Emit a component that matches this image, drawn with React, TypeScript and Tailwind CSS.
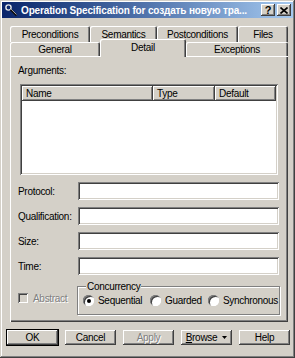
import React from "react";

const raised =
  "shadow-[inset_-1px_-1px_0_#404040,inset_1px_1px_0_#ffffff,inset_-2px_-2px_0_#808080,inset_2px_2px_0_#d4d0c8]";
const sunken =
  "shadow-[inset_1px_1px_0_#808080,inset_-1px_-1px_0_#ffffff,inset_2px_2px_0_#404040,inset_-2px_-2px_0_#d4d0c8]";
const tabEdge =
  "rounded-t-[2px] shadow-[inset_1px_1px_0_#ffffff,inset_-1px_0_0_#404040,inset_-2px_0_0_#808080]";

function Tab({ label, w, h, selected }: { label: string; w: string; h: string; selected?: boolean }) {
  return (
    <div
      className={`${w} ${h} ${tabEdge} bg-[#d4d0c8] flex items-center justify-center ${
        selected ? "relative z-10 -mb-px pb-[2px]" : ""
      }`}
    >
      {label}
    </div>
  );
}

function TextRow({ label }: { label: string }) {
  return (
    <div className="flex items-center h-[18px]">
      <span className="w-[68px] pl-[8px]">{label}</span>
      <div className={`w-[201px] h-[18px] bg-white ${sunken}`} />
    </div>
  );
}

function Radio({ label, checked, w }: { label: string; checked?: boolean; w: string }) {
  return (
    <div className={`flex items-center ${w}`}>
      <div className="w-[11px] h-[11px] rounded-full bg-white shadow-[inset_1px_1px_0_#808080,inset_-1px_-1px_0_#ffffff,inset_2px_2px_0_#404040] flex items-center justify-center">
        {checked && <div className="w-[4px] h-[4px] rounded-full bg-black" />}
      </div>
      <span className="ml-[4px]">{label}</span>
    </div>
  );
}

function Button({ children, def, disabled }: { children: React.ReactNode; def?: boolean; disabled?: boolean }) {
  return (
    <div
      className={`w-[51px] h-[15px] flex items-center justify-center bg-[#d4d0c8] ${
        def ? "outline outline-1 outline-black" : ""
      } ${raised} ${disabled ? "text-[#808080] [text-shadow:1px_1px_0_#ffffff]" : ""}`}
    >
      {children}
    </div>
  );
}

export default function App() {
  return (
    <div
      className="w-[295px] h-[358px] bg-[#d4d0c8] text-black text-[10px] tracking-[-0.3px] leading-[13px] overflow-hidden shadow-[inset_-1px_-1px_0_#404040,inset_1px_1px_0_#d4d0c8,inset_-2px_-2px_0_#808080,inset_2px_2px_0_#ffffff]"
      style={{ fontFamily: '"Liberation Sans", Arial, sans-serif' }}
    >
      {/* title bar */}
      <div className="mx-[2px] mt-[2px] h-[16px] flex items-center bg-gradient-to-r from-[#0a246a] to-[#a6caf0]">
        <svg width="14" height="14" viewBox="0 0 14 14" className="ml-[2px] shrink-0">
          <circle cx="4.5" cy="4.5" r="2.6" fill="none" stroke="#e8e8e8" strokeWidth="1.4" />
          <line x1="6.5" y1="6.5" x2="12.5" y2="12.5" stroke="#101010" strokeWidth="2" />
          <line x1="7" y1="6" x2="12.5" y2="11.5" stroke="#c0c0c0" strokeWidth="0.8" />
        </svg>
        <span className="ml-[3px] min-w-0 text-white font-bold text-[10px] tracking-[-0.15px] whitespace-nowrap flex-1 overflow-hidden">
          Operation Specification for создать новую тра...
        </span>
        <div className={`w-[14px] h-[12px] shrink-0 bg-[#d4d0c8] ${raised} flex items-center justify-center font-bold text-[11px] leading-none`}>
          ?
        </div>
        <div className={`w-[14px] h-[12px] shrink-0 ml-[2px] mr-[2px] bg-[#d4d0c8] ${raised} flex items-center justify-center`}>
          <svg width="8" height="7" viewBox="0 0 8 7">
            <path d="M0.5 0.5 L7.5 6.5 M7.5 0.5 L0.5 6.5" stroke="#000" strokeWidth="1.6" />
          </svg>
        </div>
      </div>

      {/* tabs */}
      <div className="ml-[10px] mt-[8px] w-[278px]">
        <div className="flex h-[16px]">
          <Tab label="Preconditions" w="w-[80px]" h="h-[16px]" />
          <Tab label="Semantics" w="w-[67px]" h="h-[16px]" />
          <Tab label="Postconditions" w="w-[81px]" h="h-[16px]" />
          <Tab label="Files" w="w-[50px]" h="h-[16px]" />
        </div>
        <div className="flex items-end -mt-[3px]">
          <Tab label="General" w="w-[90px]" h="h-[14px]" />
          <Tab label="Detail" w="w-[86px]" h="h-[18px]" selected />
          <Tab label="Exceptions" w="w-[102px]" h="h-[14px]" />
        </div>

        {/* panel */}
        <div className="h-[266px] flex flex-col shadow-[inset_1px_1px_0_#ffffff,inset_-1px_-1px_0_#404040,inset_-2px_-2px_0_#808080]">
          <div className="pl-[8px] pt-[8px]">Arguments:</div>
          <div className={`ml-[10px] mt-[7px] w-[258px] h-[91px] bg-white p-[2px] ${sunken}`}>
            <div className="flex h-[15px]">
              <div className={`w-[131px] bg-[#d4d0c8] ${raised} pl-[4px] flex items-center`}>Name</div>
              <div className={`w-[62px] bg-[#d4d0c8] ${raised} pl-[4px] flex items-center`}>Type</div>
              <div className={`flex-1 bg-[#d4d0c8] ${raised} pl-[4px] flex items-center`}>Default</div>
            </div>
          </div>
          <div className="mt-[7px] flex flex-col gap-[7px]">
            <TextRow label="Protocol:" />
            <TextRow label="Qualification:" />
            <TextRow label="Size:" />
            <TextRow label="Time:" />
          </div>
          <div className="mt-[6px] flex items-center">
            <div className="w-[67px] pl-[8px] flex items-center text-[#808080] [text-shadow:1px_1px_0_#ffffff]">
              <div className={`w-[10px] h-[10px] bg-[#d4d0c8] ${sunken} shrink-0`} />
              <span className="ml-[5px]">Abstract</span>
            </div>
            <fieldset className="w-[203px] h-[34px] border border-[#808080] shadow-[inset_1px_1px_0_#ffffff,1px_1px_0_#ffffff] pl-[5px]">
              <legend className="bg-[#d4d0c8] px-[1px] ml-[3px] leading-[11px]">Concurrency</legend>
              <div className="flex items-center mt-[2px]">
                <Radio label="Sequential" checked w="w-[67px]" />
                <Radio label="Guarded" w="w-[58px]" />
                <Radio label="Synchronous" w="w-[70px]" />
              </div>
            </fieldset>
          </div>
        </div>
      </div>

      {/* buttons */}
      <div className="mt-[8px] ml-[7px] flex gap-[7px]">
        <Button def>OK</Button>
        <Button>Cancel</Button>
        <Button disabled>Apply</Button>
        <Button>
          <span>
            <span className="underline">B</span>rowse
          </span>
          <svg width="5" height="3" viewBox="0 0 5 3" className="ml-[5px]">
            <path d="M0 0 H5 L2.5 3 Z" fill="#000" />
          </svg>
        </Button>
        <Button>Help</Button>
      </div>
    </div>
  );
}
